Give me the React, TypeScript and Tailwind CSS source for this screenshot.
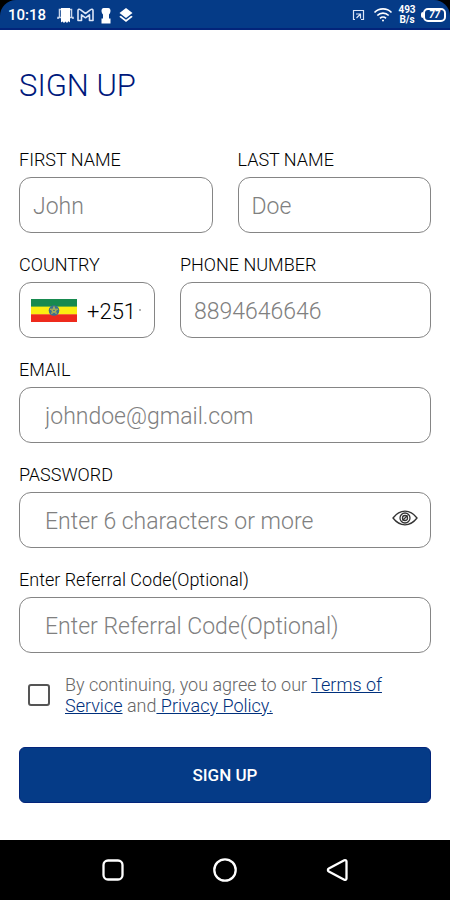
import React, { useState } from 'react';

const inputClass =
  'h-14 w-full min-w-0 rounded-xl border border-[#858585] bg-white pt-0.5 text-[23px] font-light text-black outline-none placeholder:text-[#808080] placeholder:opacity-100 focus:border-[#053b87]';

const StatusBar: React.FC = () => (
  <div className="bg-black">
    <header className="flex h-[30px] items-center justify-between rounded-t-2xl border-b-2 border-[#03247a] bg-[#053b87] pl-2 pr-1 pt-0.5 text-white">
      <div className="flex items-center gap-[3px]">
        <span className="mr-2 text-[15px] font-medium">10:18</span>
        {/* notifications */}
        <svg width="17" height="17" viewBox="0 0 17 17">
          <path d="M5 10.500H1V12M4 2.500H2.500V10.500M13 2.500h1.500v8M12 10.500h4V12" fill="none" stroke="#c9d5ea" strokeWidth="1.500" />
          <path d="M4 1h9v14.500l-1.500-1.200L10 16l-1.500-1.400L7 16l-1.500-1.500L4 15.500z" fill="#fff" />
        </svg>
        <svg width="17" height="14" viewBox="0 0 17 14" fill="none" stroke="#dce6f7" strokeWidth="1.600" strokeLinejoin="round">
          <path d="M1 12.500V2.500C1 1.200 2.400 1 3.300 1.700L8.500 5.500l5.200-3.800C14.600 1 16 1.200 16 2.500v10h-3.500V6.800L8.500 9.800 4.500 6.800v5.700z" />
        </svg>
        <svg width="18" height="17" viewBox="0 0 18 17" fill="#fff">
          <path d="M6.500 1h5a2.500 2.500 0 0 1 2 2.500c0 1.800-.500 3-1.500 4V11.500H13.500V16.500H4.500V11.500H6V7.500c-1-1-1.500-2.200-1.500-4A2.500 2.500 0 0 1 6.500 1z" />
        </svg>
        <svg width="16" height="16" viewBox="0 0 16 16" fill="#fff">
          <path d="M8 1l6.500 5L8 11 1.500 6z" />
          <path d="M2.800 8.700L8 12.700l5.200-4 1.500 1.100L8 15 1.300 9.800z" />
        </svg>
      </div>
      <div className="flex items-center gap-1">
        <svg width="13" height="12" viewBox="0 0 13 12" fill="none" stroke="#dce6f7" strokeWidth="1.200">
          <path d="M3 10.500H1.500v-9h10v9H9" />
          <path d="M4 5h4.500v4.500M8 5.500L4.500 9" />
        </svg>
        <svg className="ml-1" width="20" height="16" viewBox="0 0 20 16" fill="none" stroke="#fff" strokeWidth="1.700">
          <path d="M1.500 5.500a12 12 0 0 1 17 0M4.300 8.500a8 8 0 0 1 11.400 0M7 11.300a4.300 4.300 0 0 1 6 0" />
          <circle cx="10" cy="13.600" r="1" fill="#fff" stroke="none" />
        </svg>
        <span className="w-5 text-center text-[10px] font-bold leading-[10px]">493 B/s</span>
        <span className="flex items-center">
          <span className="h-[6px] w-[2px] rounded-l bg-white" />
          <span className="flex h-[14px] w-[23px] items-center justify-center rounded-[5px] border-2 border-white text-[10px] font-bold italic leading-none">
            77
          </span>
        </span>
      </div>
    </header>
  </div>
);

const EthiopiaFlag: React.FC = () => (
  <svg className="shrink-0" width="46" height="23" viewBox="0 0 46 23">
    <rect width="46" height="8" fill="#178a4f" />
    <rect y="7.600" width="46" height="8" fill="#fbee12" />
    <rect y="15.300" width="46" height="7.700" fill="#ee2a1c" />
    <circle cx="23" cy="11.500" r="5.300" fill="#3c6f8f" />
    <path d="M23 7.500l2.400 7.200-6.200-4.500h7.600l-6.200 4.500z" fill="none" stroke="#c4c04a" strokeWidth="0.800" />
  </svg>
);

const EyeIcon: React.FC = () => (
  <svg width="26" height="18" viewBox="0 0 26 18" fill="none" stroke="#333" strokeWidth="1.300">
    <path d="M1 9C4.500 4.500 8.500 2.200 13 2.200S21.500 4.500 25 9c-3.500 4.500-7.500 6.800-12 6.800S4.500 13.500 1 9z" />
    <circle cx="13" cy="9" r="5" />
    <circle cx="13" cy="9" r="2.500" />
    <path d="M10.500 11.500l5-5" />
  </svg>
);

interface FieldProps {
  id: string;
  label: string;
  className?: string;
  children: React.ReactNode;
}

const Field: React.FC<FieldProps> = ({ id, label, className = '', children }) => (
  <div className={`flex min-w-0 flex-col gap-1.5 ${className}`}>
    <label htmlFor={id} className="whitespace-nowrap text-lg font-light leading-[22px] text-black">
      {label}
    </label>
    {children}
  </div>
);

const NavBar: React.FC = () => (
  <nav className="flex h-[60px] items-center justify-center gap-[88px] bg-black text-white">
    <button type="button" aria-label="Recents">
      <svg width="24" height="24" viewBox="0 0 24 24" fill="none" stroke="currentColor" strokeWidth="2.300">
        <rect x="2.500" y="2.500" width="19" height="19" rx="4.500" />
      </svg>
    </button>
    <button type="button" aria-label="Home">
      <svg width="24" height="24" viewBox="0 0 24 24" fill="none" stroke="currentColor" strokeWidth="2.300">
        <circle cx="12" cy="12" r="10.700" />
      </svg>
    </button>
    <button type="button" aria-label="Back">
      <svg width="24" height="24" viewBox="0 0 24 24" fill="none" stroke="currentColor" strokeWidth="2.300" strokeLinejoin="round">
        <path d="M19.300 2.300L3.800 10.500a1.700 1.700 0 0 0 0 3l15.500 8.200a1.500 1.500 0 0 0 2.200-1.300V3.600a1.500 1.500 0 0 0-2.200-1.300z" />
      </svg>
    </button>
  </nav>
);

export default function App() {
  const [showPassword, setShowPassword] = useState(false);
  const [agreed, setAgreed] = useState(false);

  return (
    <div className="flex min-h-screen flex-col bg-white font-['Roboto',sans-serif]">
      <StatusBar />

      <main className="flex-1 px-[19px] pt-9">
        <h1 className="text-[31px] font-light leading-10 text-[#00187c]">SIGN UP</h1>

        <form className="mt-[43px] flex flex-col gap-[21px]" onSubmit={(e) => e.preventDefault()}>
          <div className="flex gap-[25px]">
            <Field id="first" label="FIRST NAME" className="flex-1">
              <input id="first" className={`${inputClass} px-[13px]`} placeholder="John" />
            </Field>
            <Field id="last" label="LAST NAME" className="flex-1">
              <input id="last" className={`${inputClass} px-[13px]`} placeholder="Doe" />
            </Field>
          </div>

          <div className="flex gap-[25px]">
            <Field id="country" label="COUNTRY" className="w-[136px] shrink-0">
              <div className="flex h-14 items-center rounded-xl border border-[#858585] pl-[11px]">
                <EthiopiaFlag />
                <select id="country" className="ml-[10px] w-[52px] appearance-none bg-transparent pt-0.5 text-[22px] font-light text-black outline-none">
                  <option>+251</option>
                </select>
                <span className="size-[2px] rounded-full bg-[#999]" />
              </div>
            </Field>
            <Field id="phone" label="PHONE NUMBER" className="flex-1">
              <input id="phone" type="tel" className={`${inputClass} px-[13px]`} placeholder="8894646646" />
            </Field>
          </div>

          <Field id="email" label="EMAIL">
            <input id="email" type="email" className={`${inputClass} px-[25px]`} placeholder="johndoe@gmail.com" />
          </Field>

          <Field id="password" label="PASSWORD">
            <div className="relative">
              <input
                id="password"
                type={showPassword ? 'text' : 'password'}
                className={`${inputClass} pl-[25px] pr-12`}
                placeholder="Enter 6 characters or more"
              />
              <button
                type="button"
                aria-label="Show password"
                onClick={() => setShowPassword(!showPassword)}
                className="absolute right-[13px] top-[17px]"
              >
                <EyeIcon />
              </button>
            </div>
          </Field>

          <Field id="referral" label="Enter Referral Code(Optional)">
            <input id="referral" className={`${inputClass} px-[25px]`} placeholder="Enter Referral Code(Optional)" />
          </Field>

          <div className="flex items-center gap-[15px] pl-[9px]">
            <input
              id="terms"
              type="checkbox"
              checked={agreed}
              onChange={(e) => setAgreed(e.target.checked)}
              className="size-[22px] shrink-0 appearance-none rounded-[3px] border-2 border-[#555] checked:bg-[#053b87]"
            />
            <label htmlFor="terms" className="max-w-[340px] text-lg font-light leading-[21px] text-[#666]">
              By continuing, you agree to our{' '}
              <a href="#terms" className="text-[#00307c] underline">Terms of Service</a> and
              <a href="#privacy" className="text-[#00307c] underline"> Privacy Policy.</a>
            </label>
          </div>

          <button
            type="submit"
            className="mt-[10px] h-14 rounded-md border border-[#03247a] bg-[#053b87] pt-0.5 text-[17px] font-medium text-white"
          >
            SIGN UP
          </button>
        </form>
      </main>

      <NavBar />
    </div>
  );
}
